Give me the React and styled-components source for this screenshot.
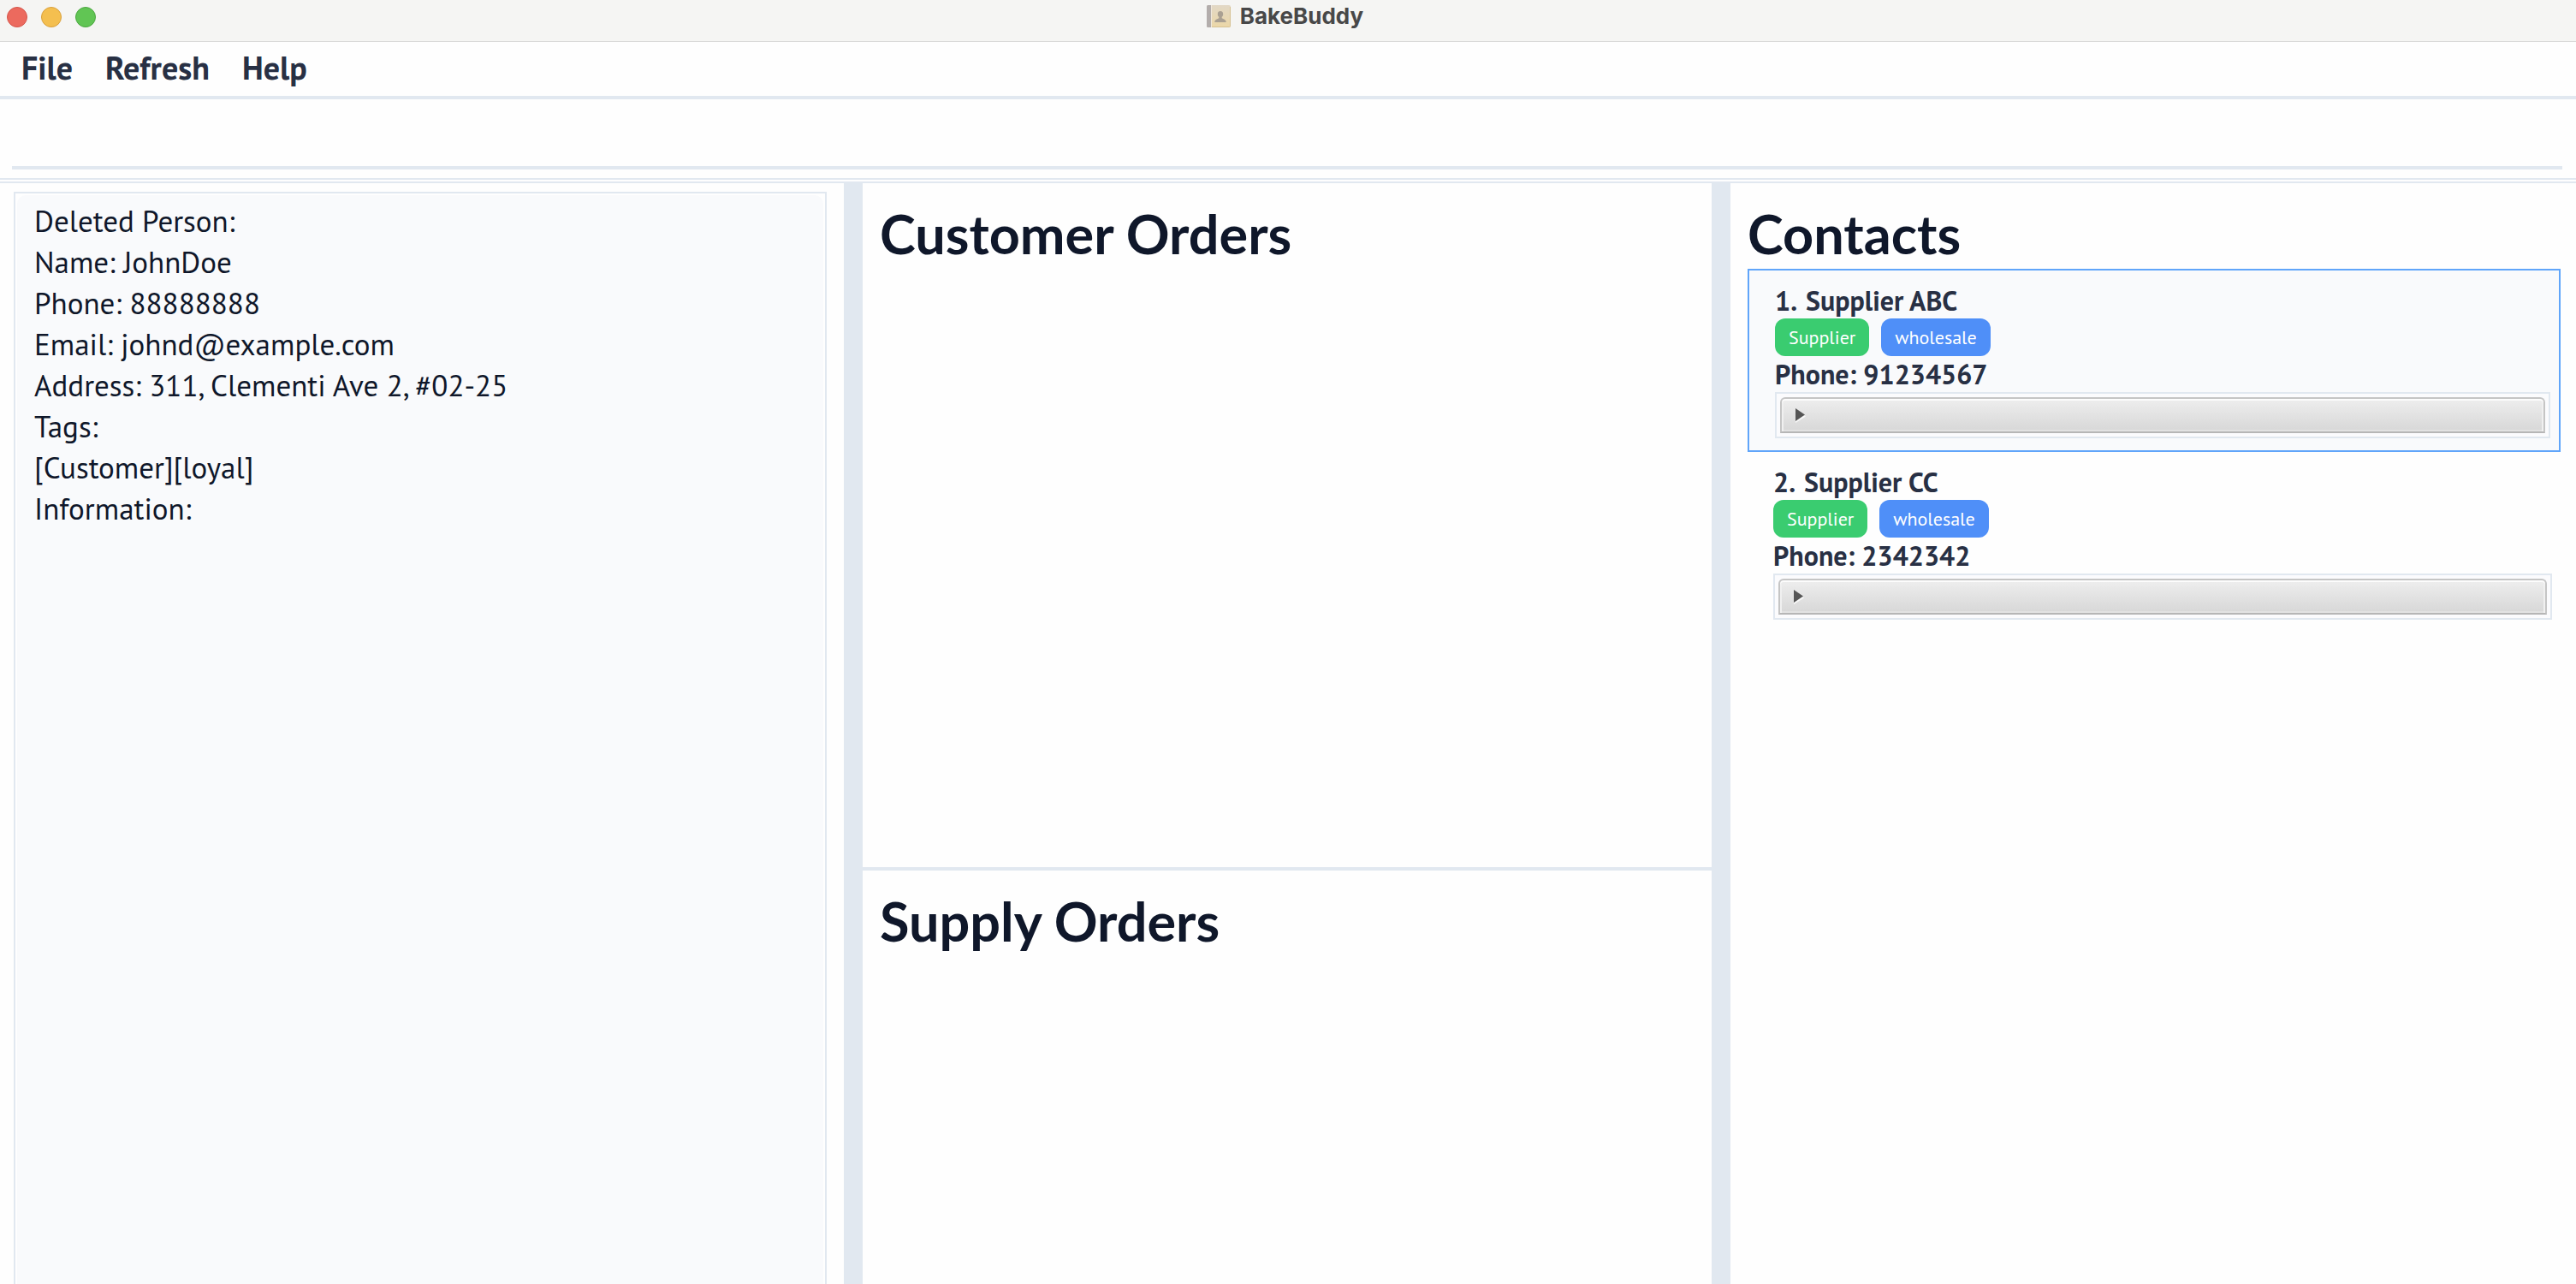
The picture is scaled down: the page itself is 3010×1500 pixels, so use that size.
import React from 'react';
import styled, { createGlobalStyle } from 'styled-components';

const line = '#e1e8f0';
const ink = '#0f172a';
const slate = '#283044';

const GlobalStyle = createGlobalStyle`
  *, *::before, *::after { box-sizing: border-box; }
  body {
    margin: 0;
    background: #fefefe;
    color: ${slate};
    font-family: "PT Sans", "Noto Sans", sans-serif;
  }
`;

const Window = styled.div`
  display: flex;
  flex-direction: column;
  height: 100vh;
  overflow: hidden;
`;

const TitleBar = styled.header`
  display: grid;
  grid-template-columns: 1fr auto 1fr;
  align-items: center;
  height: 49px;
  padding: 0 8px 8px;
  background: #f5f5f3;
  border-bottom: 1px solid #d9d9d9;
`;

const Lights = styled.div`
  display: flex;
  gap: 16px;
`;

const Light = styled.button`
  width: 24px;
  height: 24px;
  padding: 0;
  border: 1px solid ${(p) => p.$edge};
  border-radius: 50%;
  background: ${(p) => p.$fill};
`;

const Title = styled.div`
  display: flex;
  align-items: center;
  gap: 10px;
  padding: 0 8px 2px 0;
  color: #484848;
  font: 700 26px/28px Inter, sans-serif;
`;

const MenuBar = styled.nav`
  display: flex;
  align-items: center;
  height: 67px;
  padding: 0 6px 4px;
  border-bottom: 4px solid ${line};
`;

const MenuButton = styled.button`
  padding: 0 19px;
  border: 0;
  background: none;
  color: ${slate};
  font: inherit;
  font-size: 38px;
  font-weight: 700;
  line-height: 48px;
`;

const CommandBar = styled.form`
  padding: 0 16px 10px 14px;
  border-bottom: 2px solid ${line};
`;

const CommandInput = styled.input`
  display: block;
  width: 100%;
  height: 82px;
  padding: 0 12px;
  border: 0;
  border-bottom: 4px solid ${line};
  outline: 0;
  background: transparent;
  color: ${ink};
  font: inherit;
  font-size: 35px;
`;

const Columns = styled.main`
  flex: 1;
  min-height: 0;
  display: grid;
  grid-template-columns: 493fr 22px 496fr 22px 494fr;
  margin-top: 2px;
  border-top: 2px solid ${line};
`;

const Divider = styled.div`
  background: ${line};
`;

const ResultPane = styled.section`
  display: flex;
  padding: 10px 20px 0 16px;
`;

const ResultFrame = styled.div`
  flex: 1;
  display: flex;
  padding: 2px 2px 0;
  border: 2px solid ${line};
  border-bottom: 0;
`;

const ResultText = styled.textarea`
  flex: 1;
  padding: 6px 20px;
  border: 0;
  border-radius: 10px 10px 0 0;
  outline: 0;
  resize: none;
  overflow: hidden;
  background: #f9fafc;
  color: ${ink};
  font: inherit;
  font-size: 35px;
  line-height: 48px;
`;

const Orders = styled.div`
  display: grid;
  grid-template-rows: 38fr 4px 23fr;
`;

const Pane = styled.section`
  padding: 20px 18px 0 20px;
`;

const Heading = styled.h1`
  margin: 0;
  padding-bottom: 2px;
  color: ${ink};
  font: 700 63px/78px Lato, sans-serif;
`;

const ContactList = styled.ul`
  margin: 0;
  padding: 0;
  list-style: none;
`;

const Contact = styled.li`
  padding: 14px 10px 14px 30px;
  border: ${(p) => (p.$selected ? '2px solid #60a5fa' : '0')};
  background: ${(p) => (p.$selected ? '#f9fafc' : 'transparent')};
`;

const ContactLine = styled.div`
  font-size: 32px;
  font-weight: 700;
  line-height: 42px;
`;

const Name = styled(ContactLine)`
  display: flex;
  gap: 10px;
`;

const Tags = styled.div`
  display: flex;
  gap: 14px;
`;

const Tag = styled.span`
  padding: 8px 16px;
  border-radius: 12px;
  background: ${(p) => (p.$kind === 'role' ? '#3acc70' : '#4f8ff8')};
  color: #fff;
  font-size: 22px;
  line-height: 28px;
`;

const Fold = styled.div`
  padding: 4px;
  border: 2px solid ${line};
  background: #fbfbfd;
`;

const FoldButton = styled.button`
  display: flex;
  align-items: center;
  width: 100%;
  height: 42px;
  padding: 0 16px;
  border: 2px solid #c5c5c5;
  border-bottom-color: #b6b6b6;
  border-radius: 6px 6px 0 0;
  background: linear-gradient(#eeeeee, #d7d7d7);
  box-shadow: inset 0 2px #fcfcfc, inset 2px 0 #f0f0f0, inset -2px 0 #f0f0f0, inset 0 -2px #e2e2e2;
`;

const contacts = [
  { name: 'Supplier ABC', phone: '91234567', selected: true },
  { name: 'Supplier CC', phone: '2342342', selected: false },
];

const result = `Deleted Person:
Name: JohnDoe
Phone: 88888888
Email: johnd@example.com
Address: 311, Clementi Ave 2, #02-25
Tags:
[Customer][loyal]
Information:`;

const BookIcon = () => (
  <svg width="30" height="28" viewBox="0 0 30 28" aria-hidden="true">
    <defs>
      <linearGradient id="cover" x1="0" y1="0" x2="0" y2="1">
        <stop offset="0" stopColor="#e2d8c6" />
        <stop offset="1" stopColor="#ecd7a6" />
      </linearGradient>
    </defs>
    <rect x="1" y="1" width="28" height="26" rx="2" fill="url(#cover)" />
    <path d="M2.500 1H6v26H2.500Q1 27 1 25.500v-23Q1 1 2.500 1z" fill="#b3adab" />
    <path d="M6.500 1v26" stroke="#f0e8dc" />
    <path d="M28.500 3v22.500q0 1-1 1H7" fill="none" stroke="#d6c294" />
    <path d="M17 8c-2.200 0-3.200 1.500-3.200 3.400 0 1.500.6 2.800 1.500 3.400v1.400c-1.500 1-5 1.200-5 4.800h13.400c0-3.600-3.500-3.800-5-4.800v-1.400c.9-.6 1.500-1.900 1.500-3.400C20.200 9.500 19.200 8 17 8z" fill="#aaa092" />
  </svg>
);

const Arrow = () => (
  <svg width="12" height="18" viewBox="0 0 12 18" aria-hidden="true">
    <path d="M0 3l12 7.500L0 18z" fill="#f8f8f8" />
    <path d="M0 1l11 7.500L0 16z" fill="#555" />
  </svg>
);

export default function App() {
  return (
    <Window>
      <GlobalStyle />
      <TitleBar>
        <Lights>
          <Light aria-label="Close" $fill="#ec6a5e" $edge="#d5564b" />
          <Light aria-label="Minimize" $fill="#f4bf4f" $edge="#d9a03c" />
          <Light aria-label="Zoom" $fill="#61c554" $edge="#4ba73f" />
        </Lights>
        <Title>
          <BookIcon />
          BakeBuddy
        </Title>
      </TitleBar>
      <MenuBar>
        {['File', 'Refresh', 'Help'].map((label) => (
          <MenuButton key={label} type="button">{label}</MenuButton>
        ))}
      </MenuBar>
      <CommandBar onSubmit={(e) => e.preventDefault()}>
        <CommandInput aria-label="Command" />
      </CommandBar>
      <Columns>
        <ResultPane>
          <ResultFrame>
            <ResultText aria-label="Result" readOnly value={result} />
          </ResultFrame>
        </ResultPane>
        <Divider />
        <Orders>
          <Pane>
            <Heading>Customer Orders</Heading>
          </Pane>
          <Divider />
          <Pane>
            <Heading>Supply Orders</Heading>
          </Pane>
        </Orders>
        <Divider />
        <Pane>
          <Heading>Contacts</Heading>
          <ContactList>
            {contacts.map((c, i) => (
              <Contact key={c.name} $selected={c.selected}>
                <Name>
                  <span>{i + 1}.</span>
                  <span>{c.name}</span>
                </Name>
                <Tags>
                  <Tag $kind="role">Supplier</Tag>
                  <Tag>wholesale</Tag>
                </Tags>
                <ContactLine>Phone: {c.phone}</ContactLine>
                <Fold>
                  <FoldButton type="button" aria-expanded="false" aria-label={`Details of ${c.name}`}>
                    <Arrow />
                  </FoldButton>
                </Fold>
              </Contact>
            ))}
          </ContactList>
        </Pane>
      </Columns>
    </Window>
  );
}
